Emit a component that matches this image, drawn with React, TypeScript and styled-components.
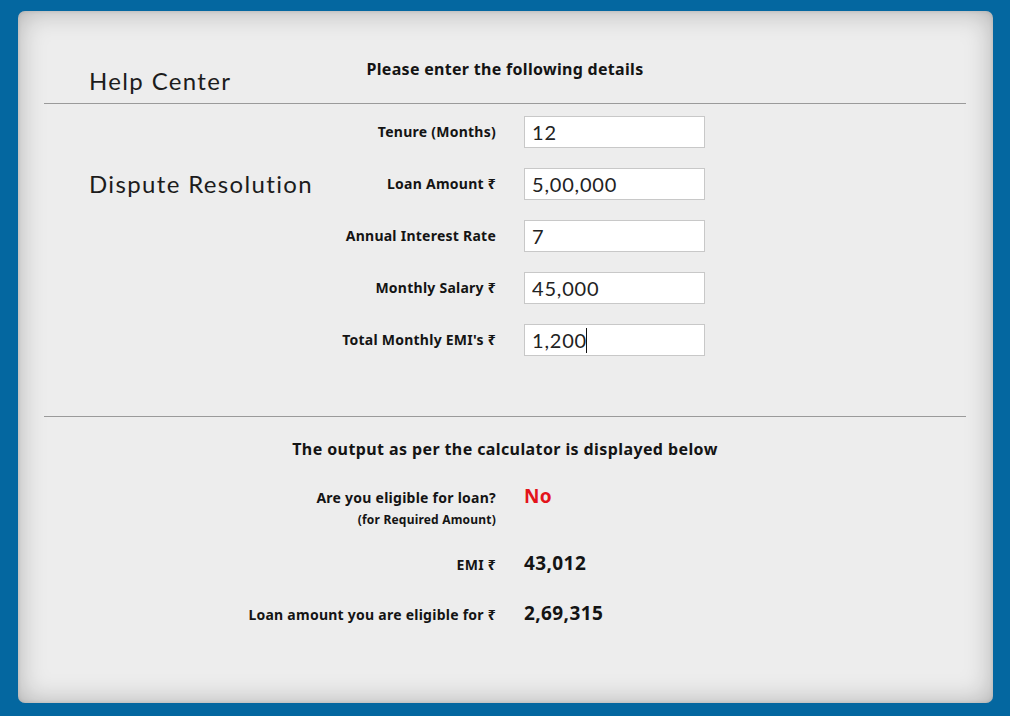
import React, { useEffect, useRef } from 'react';
import styled, { createGlobalStyle } from 'styled-components';

const Global = createGlobalStyle`
  html, body { margin: 0; padding: 0; background: #0467a0; }
  * { box-sizing: border-box; }
`;

const Page = styled.div`
  width: 1010px;
  height: 716px;
  padding: 11px 17px 13px 18px;
  background: #0467a0;
`;

const Panel = styled.main`
  height: 100%;
  background: #ededed;
  border-radius: 7px;
  box-shadow: inset 0 0 28px rgba(0, 0, 0, 0.26), inset 0 0 4px rgba(0, 0, 0, 0.12);
  padding: 0 27px 0 26px;
  display: flex;
  flex-direction: column;
  color: #141414;
  font-family: 'Noto Sans', 'DejaVu Sans', sans-serif;
`;

const Header = styled.header`
  height: 93px;
  padding-top: 48px;
  border-bottom: 1px solid #9a9a9a;
  display: grid;
  grid-template-columns: 1fr auto 1fr;
  align-items: start;
`;

const SideTitle = styled.h1<{ $row?: number }>`
  margin: 0;
  padding-left: 45px;
  font-family: Lato, 'Noto Sans', sans-serif;
  font-weight: 400;
  font-size: 24px;
  line-height: 28px;
  letter-spacing: 1.35px;
  color: #1c1c1c;
  white-space: nowrap;
  ${(p) => (p.$row ? `grid-row: ${p.$row}; align-self: center;` : 'margin-top: 8px;')}
`;

const Heading = styled.h2`
  margin: 0;
  font-size: 16px;
  line-height: 20px;
  font-weight: 700;
  letter-spacing: 0.3px;
  text-align: center;
`;

const FormBody = styled.section`
  padding: 12px 0 60px;
  border-bottom: 1px solid #9a9a9a;
  display: grid;
  grid-template-columns: 276px 176px 28px 181px;
  grid-auto-rows: 32px;
  row-gap: 20px;
  align-items: center;
`;

const Label = styled.label`
  grid-column: 2;
  justify-self: end;
  text-align: right;
  font-size: 14px;
  font-weight: 700;
  letter-spacing: 0.25px;
  line-height: 20px;
  white-space: nowrap;
`;

const InputBox = styled.div`
  grid-column: 4;
  position: relative;
  width: 181px;
  height: 32px;
`;

const inputFont = `
  font-family: Lato, 'Noto Sans', sans-serif;
  font-weight: 400;
  font-size: 20px;
  letter-spacing: 0.8px;
`;

const Input = styled.input`
  width: 181px;
  height: 32px;
  border: 1px solid #c8c8c8;
  background: #fff;
  padding: 0 7px;
  ${inputFont}
  color: #222;
  outline: none;
  &:focus { outline: none; }
`;

const CaretLayer = styled.div`
  position: absolute;
  left: 8px;
  top: 3px;
  height: 26px;
  display: flex;
  align-items: center;
  pointer-events: none;
  ${inputFont}
  color: transparent;
  white-space: pre;
`;

const Caret = styled.span`
  display: inline-block;
  width: 1px;
  height: 25px;
  margin-left: -1px;
  background: #111;
`;

const Output = styled.section`
  padding-top: 21px;
  display: flex;
  flex-direction: column;
`;

const OutputHeading = styled.h3`
  margin: 0 0 24px;
  text-align: center;
  font-size: 16px;
  line-height: 22px;
  font-weight: 700;
  letter-spacing: 0.4px;
`;

const OutputGrid = styled.div`
  display: grid;
  grid-template-columns: 452px 1fr;
  column-gap: 28px;
  align-items: baseline;
`;

const OutLabel = styled.div<{ $h: number }>`
  height: ${(p) => p.$h}px;
  text-align: right;
  font-size: 14px;
  font-weight: 700;
  letter-spacing: 0.25px;
  line-height: 20px;
  white-space: nowrap;
`;

const SubNote = styled.div`
  margin-top: 3px;
  font-size: 12px;
  line-height: 18px;
  font-weight: 700;
  letter-spacing: 0.2px;
`;

const Value = styled.div<{ $red?: boolean }>`
  font-size: 19px;
  line-height: 24px;
  font-weight: 700;
  letter-spacing: 0.4px;
  color: ${(p) => (p.$red ? '#e3141b' : '#141414')};
`;

const fields = [
  { label: 'Tenure (Months)', value: '12' },
  { label: 'Loan Amount ₹', value: '5,00,000' },
  { label: 'Annual Interest Rate', value: '7' },
  { label: 'Monthly Salary ₹', value: '45,000' },
  { label: "Total Monthly EMI's ₹", value: '1,200', active: true },
];

export default function App() {
  const lastRef = useRef<HTMLInputElement>(null);
  useEffect(() => {
    const el = lastRef.current;
    if (el) {
      el.focus();
      el.setSelectionRange(el.value.length, el.value.length);
    }
  }, []);

  return (
    <>
      <Global />
      <Page>
        <Panel>
          <Header>
            <SideTitle>Help Center</SideTitle>
            <Heading>Please enter the following details</Heading>
            <div />
          </Header>
          <FormBody>
            <SideTitle $row={2}>Dispute Resolution</SideTitle>
            {fields.map((f, i) => (
              <React.Fragment key={f.label}>
                <Label style={{ gridRow: i + 1 }}>{f.label}</Label>
                <InputBox style={{ gridRow: i + 1 }}>
                  <Input
                    defaultValue={f.value}
                    ref={f.active ? lastRef : undefined}
                    style={f.active ? { caretColor: 'transparent' } : undefined}
                  />
                  {f.active && (
                    <CaretLayer>
                      {f.value}
                      <Caret />
                    </CaretLayer>
                  )}
                </InputBox>
              </React.Fragment>
            ))}
          </FormBody>
          <Output>
            <OutputHeading>The output as per the calculator is displayed below</OutputHeading>
            <OutputGrid>
              <OutLabel $h={63}>
                Are you eligible for loan?
                <SubNote>(for Required Amount)</SubNote>
              </OutLabel>
              <Value $red>No</Value>
              <OutLabel $h={46}>EMI ₹</OutLabel>
              <Value>43,012</Value>
              <OutLabel $h={30}>Loan amount you are eligible for ₹</OutLabel>
              <Value>2,69,315</Value>
            </OutputGrid>
          </Output>
        </Panel>
      </Page>
    </>
  );
}
